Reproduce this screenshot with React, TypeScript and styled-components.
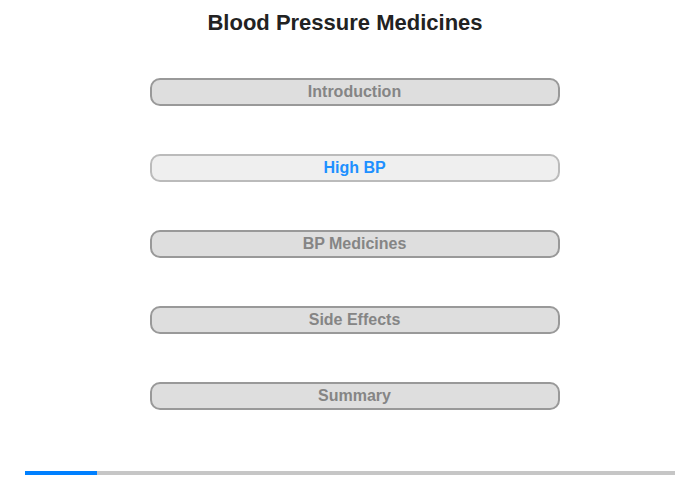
import styled, { createGlobalStyle } from "styled-components";

const GlobalStyle = createGlobalStyle`
  html, body {
    margin: 0;
    padding: 0;
    background: #fff;
    font-family: "Liberation Sans", Arial, sans-serif;
  }
`;

const Page = styled.div`
  width: 700px;
  height: 480px;
  display: flex;
  flex-direction: column;
  align-items: center;
  box-sizing: border-box;
`;

const Title = styled.h1`
  margin: 10px 10px 0 0;
  font-size: 22px;
  line-height: 26px;
  font-weight: bold;
  color: #222;
`;

const Menu = styled.nav`
  margin: 42px 0 0 9px;
  display: flex;
  flex-direction: column;
  gap: 48px;
`;

const MenuButton = styled.div<{ $active?: boolean }>`
  box-sizing: border-box;
  width: 410px;
  height: 28px;
  border: 2px solid ${(p) => (p.$active ? "#bbb" : "#999")};
  border-radius: 10px;
  background: ${(p) => (p.$active ? "#efefef" : "#dedede")};
  color: ${(p) => (p.$active ? "#1e90ff" : "#858585")};
  font-size: 16px;
  font-weight: bold;
  display: flex;
  align-items: center;
  justify-content: center;
  cursor: pointer;
`;

const Progress = styled.div`
  margin-top: auto;
  margin-bottom: 5px;
  width: 650px;
  height: 4px;
  background: #c6c6c6;
  display: flex;
`;

const ProgressFill = styled.div`
  height: 100%;
  background: #0080ff;
`;

const sections = ["Introduction", "High BP", "BP Medicines", "Side Effects", "Summary"];

export default function App() {
  const current = 1;
  return (
    <>
      <GlobalStyle />
      <Page>
        <Title>Blood Pressure Medicines</Title>
        <Menu>
          {sections.map((s, i) => (
            <MenuButton key={s} $active={i === current}>
              {s}
            </MenuButton>
          ))}
        </Menu>
        <Progress>
          <ProgressFill style={{ width: `${(72 / 650) * 100}%` }} />
        </Progress>
      </Page>
    </>
  );
}
